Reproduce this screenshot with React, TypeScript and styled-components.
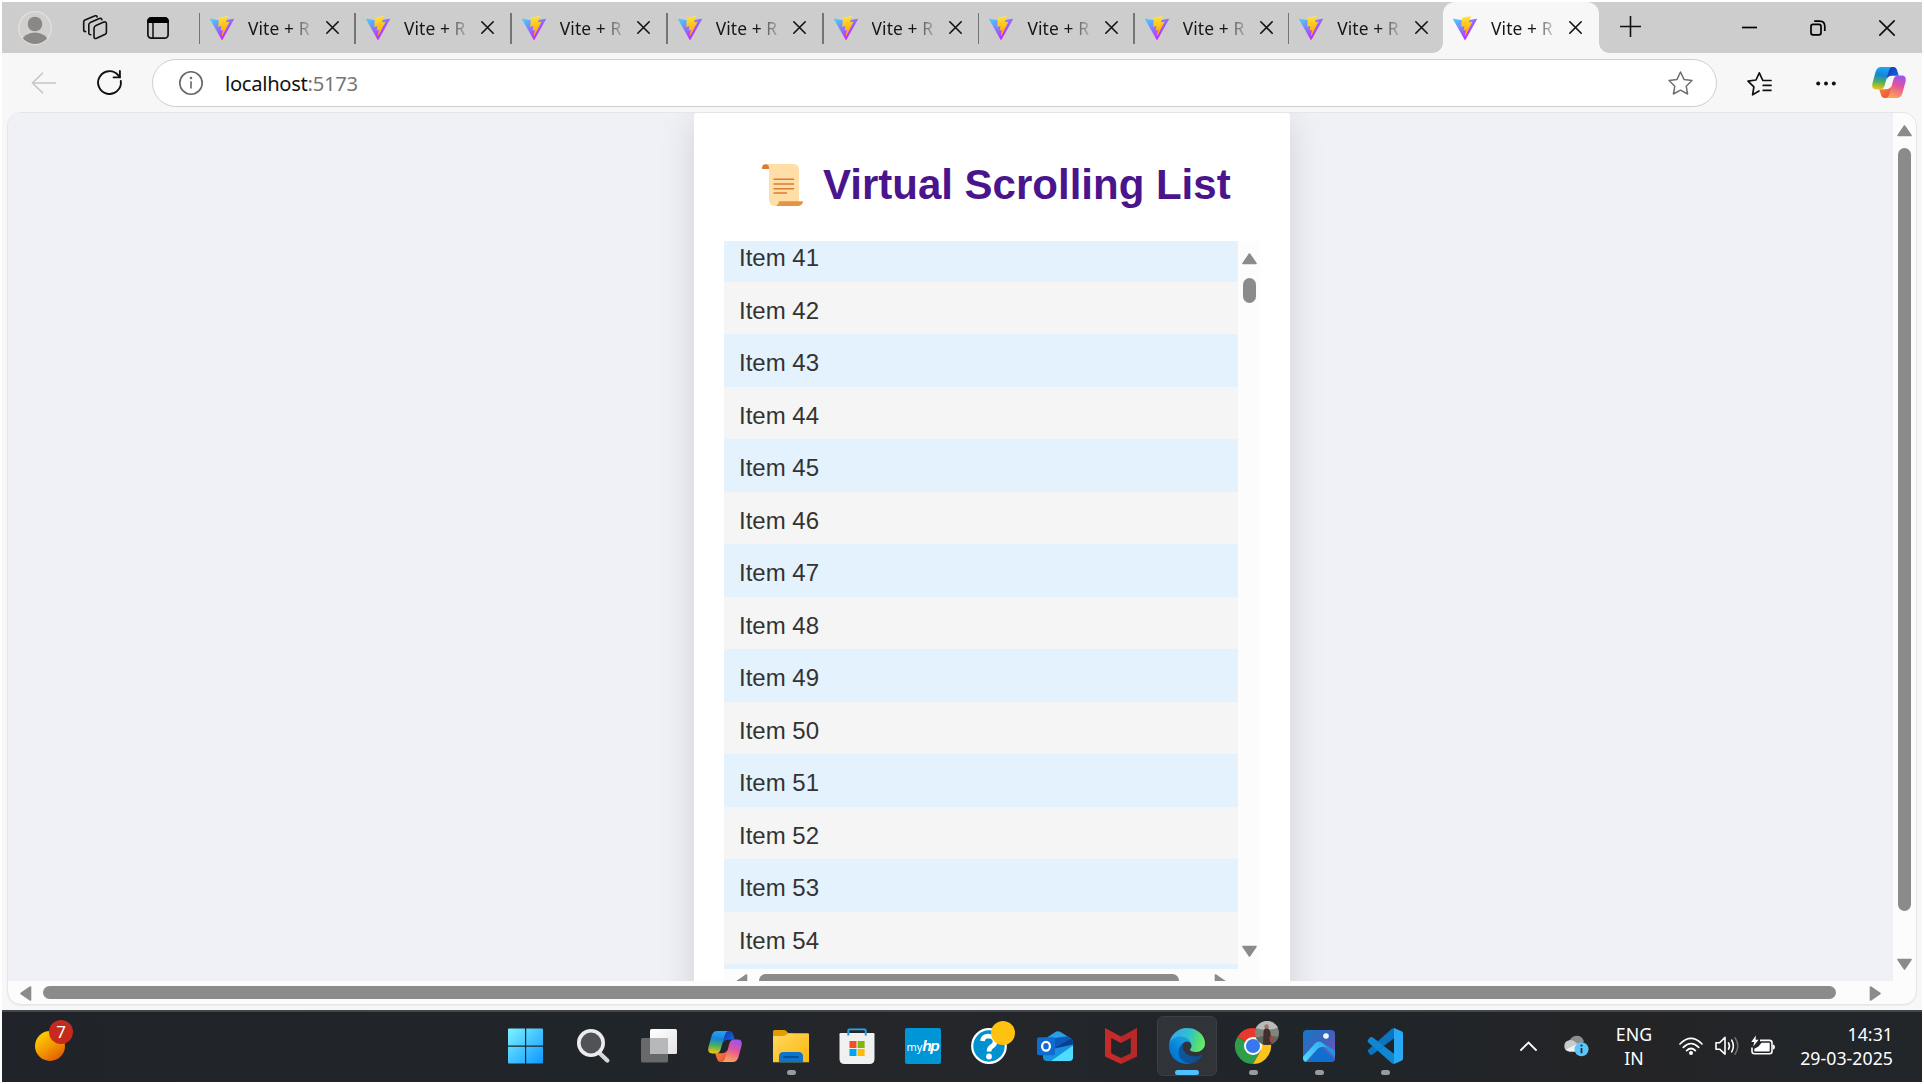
import React from "react";
import styled, { createGlobalStyle } from "styled-components";

const GlobalStyle = createGlobalStyle`
  * { box-sizing: border-box; }
  body { margin: 0; background: #fff; overflow: hidden; }
  svg { display: block; flex: none; overflow: visible; }
`;

const UI = `"Noto Sans", "Open Sans", sans-serif`;
const ARIAL = `"Liberation Sans", Arial, sans-serif`;

const Screen = styled.div`
  width: 1924px;
  height: 1084px;
  padding: 2px;
  display: flex;
  flex-direction: column;
  background: #fff;
  font-family: ${UI};
  overflow: hidden;
`;

/* ---------- tab strip ---------- */

const TabStrip = styled.header`
  height: 51px;
  flex: none;
  display: flex;
  align-items: center;
  background: #cdcdcd;
`;

const StripTools = styled.div`
  width: 197px;
  height: 51px;
  padding-left: 16px;
  display: flex;
  align-items: center;
`;

const StripTool = styled.div<{ $gap: number }>`
  margin-right: ${(p) => p.$gap}px;
`;

const Tab = styled.div<{ $width: number; $active?: boolean }>`
  position: relative;
  width: ${(p) => p.$width}px;
  height: 51px;
  flex: none;
  display: flex;
  align-items: center;
  padding-left: ${(p) => (p.$active ? 10.5 : 11)}px;
  border-radius: ${(p) => (p.$active ? "12px 12px 0 0" : "0")};
  background: ${(p) => (p.$active ? "#f7f7f7" : "transparent")};

  &::before {
    content: "";
    display: ${(p) => (p.$active ? "none" : "block")};
    position: absolute;
    left: -0.5px;
    top: 11px;
    width: 1.5px;
    height: 31px;
    background: #757575;
  }
`;

const Flare = styled.span<{ $side: "left" | "right" }>`
  position: absolute;
  bottom: 0;
  ${(p) => p.$side}: -10px;
  width: 10px;
  height: 10px;
  background: radial-gradient(
    circle at ${(p) => (p.$side === "left" ? "0 0" : "100% 0")},
    transparent 9.5px,
    #f7f7f7 10px
  );
`;

const TabTitle = styled.span`
  width: 66px;
  margin-left: 14px;
  margin-right: 11.5px;
  white-space: nowrap;
  font-size: 17.4px;
  line-height: 26px;
  letter-spacing: 0.1px;
  color: #161616;
  mask-image: linear-gradient(to right, #000 44px, rgba(0, 0, 0, 0.5) 53px, rgba(0, 0, 0, 0.12) 64px);
`;

const NewTab = styled.div`
  margin-left: 21px;
  margin-top: -2px;
`;

const WindowButtons = styled.div`
  margin-left: auto;
  padding-right: 27px;
  display: flex;
  align-items: center;
  gap: 53px;
`;

/* ---------- toolbar ---------- */

const Toolbar = styled.nav`
  height: 59px;
  flex: none;
  display: flex;
  align-items: center;
  padding: 0 16px 0 29px;
  background: #f7f7f7;
`;

const Reload = styled.div`
  margin: 0 30px 0 40px;
`;

const AddressBar = styled.div`
  width: 1565px;
  height: 48px;
  display: flex;
  align-items: center;
  padding: 0 23px 0 26px;
  border: 1.5px solid #cfcfcf;
  border-radius: 24px;
  background: #fff;
`;

const Url = styled.span`
  flex: 1;
  margin-left: 22px;
  font-size: 20.2px;
  line-height: 28px;
  letter-spacing: -0.3px;
  color: #111;
`;

const Port = styled.span`
  color: #767676;
`;

const ToolbarActions = styled.div`
  flex: 1;
  display: flex;
  align-items: center;
  justify-content: space-between;
  padding-left: 30px;
`;

/* ---------- page ---------- */

const BrowserBody = styled.main`
  flex: 1;
  min-height: 0;
  padding: 0 5px 5px 5px;
  background: #f7f7f7;
`;

const PageFrame = styled.div`
  height: 893px;
  display: grid;
  grid-template-columns: 1fr 23px;
  grid-template-rows: 1fr 23px;
  border: 1px solid #e6e6e6;
  border-radius: 14px;
  background: #fcfcfc;
  box-shadow: 0 1px 1px rgba(0, 0, 0, 0.05);
  overflow: hidden;
`;

const Viewport = styled.div`
  background: #f0f1f6;
  overflow: hidden;
  display: flex;
  align-items: flex-start;
  justify-content: flex-start;
`;

const Card = styled.section`
  width: 596px;
  height: 960px;
  flex: none;
  margin-left: 686px;
  padding: 42px 30px 0;
  border-radius: 3px;
  background: #fff;
  box-shadow: 0 6px 36px rgba(0, 0, 0, 0.13);
`;

const Title = styled.h1`
  height: 86px;
  margin: 0;
  padding-left: 38px;
  display: flex;
  align-items: flex-start;
  gap: 20px;
  font-family: ${ARIAL};
  font-size: 42px;
  line-height: 60px;
  font-weight: 700;
  color: #4a148c;
  white-space: nowrap;

  svg { margin-top: 9px; }
`;

const ListBox = styled.div`
  width: 536px;
  height: 751px;
  display: grid;
  grid-template-columns: 1fr 22px;
  grid-template-rows: 728px 23px;
  background: #fcfcfc;
`;

const Items = styled.ul`
  margin: 0;
  padding: 0;
  list-style: none;
  overflow: hidden;
`;

const Item = styled.li<{ $even: boolean }>`
  height: 52.5px;
  padding: 5px 0 0 15px;
  font-family: ${ARIAL};
  font-size: 24px;
  line-height: 48.5px;
  color: #333;
  background: ${(p) => (p.$even ? "#f5f5f5" : "#e3f2fd")};

  &:first-child { margin-top: -11.8px; }
`;

/* ---------- scrollbars ---------- */

const VTrack = styled.div<{ $top: number; $bottom: number }>`
  display: flex;
  flex-direction: column;
  align-items: center;
  padding: ${(p) => p.$top}px 0 ${(p) => p.$bottom}px;
`;

const HTrack = styled.div<{ $left: number; $right: number; $top: number }>`
  display: flex;
  align-items: flex-start;
  padding: ${(p) => p.$top}px ${(p) => p.$right}px 0 ${(p) => p.$left}px;
`;

const Thumb = styled.div<{ $w: number; $h: number; $lead: number }>`
  width: ${(p) => p.$w}px;
  height: ${(p) => p.$h}px;
  margin: ${(p) => (p.$h > p.$w ? `${p.$lead}px 0 auto` : `0 auto 0 ${p.$lead}px`)};
  flex: none;
  border-radius: 7px;
  background: #8b8b8b;
`;

/* ---------- taskbar ---------- */

const Taskbar = styled.footer`
  height: 72px;
  flex: none;
  display: flex;
  align-items: center;
  padding-bottom: 2px;
  border-top: 2px solid #43474a;
  background: linear-gradient(90deg, #20242a 0%, #202529 30%, #24262a 48%, #202529 70%, #242426 86%, #21262a 100%);
`;

const Widgets = styled.div`
  position: relative;
  width: 492px;
  height: 70px;
  padding: 20px 0 0 33px;
`;

const Sun = styled.div`
  width: 30px;
  height: 30px;
  border-radius: 50%;
  background: linear-gradient(145deg, #ffd500 8%, #f39a00 50%, #e15100 95%);
`;

const Count = styled.span`
  position: absolute;
  left: 47px;
  top: 9px;
  width: 24px;
  height: 24px;
  border-radius: 50%;
  background: #c42b1c;
  color: #fff;
  font-size: 17px;
  line-height: 24px;
  text-align: center;
`;

const Apps = styled.div`
  display: flex;
`;

const AppCell = styled.div<{ $active?: boolean }>`
  position: relative;
  width: 60px;
  height: 60px;
  margin: 0 3px;
  display: flex;
  align-items: center;
  justify-content: center;
  border-radius: 6px;
  border: 1.5px solid ${(p) => (p.$active ? "#3c3f44" : "transparent")};
  background: ${(p) => (p.$active ? "#303338" : "transparent")};
`;

const Running = styled.span<{ $active?: boolean }>`
  position: absolute;
  bottom: 0;
  left: 50%;
  width: ${(p) => (p.$active ? 24 : 9)}px;
  height: 5px;
  margin-left: ${(p) => (p.$active ? -12 : -4.5)}px;
  border-radius: 3px;
  background: ${(p) => (p.$active ? "#4cc2ff" : "#9a9b9d")};
`;

const HpTile = styled.div`
  width: 36px;
  height: 36px;
  border-radius: 2px;
  display: flex;
  align-items: baseline;
  justify-content: center;
  background: #0096d6;
  color: #fff;
  font-size: 11px;
  line-height: 35px;
`;

const HpBold = styled.b`
  font-family: ${ARIAL};
  font-style: italic;
  font-size: 15.5px;
  letter-spacing: -1.6px;
  margin-right: 1.5px;
`;

const Tray = styled.div`
  margin-left: auto;
  padding-right: 29px;
  display: flex;
  align-items: center;
  color: #fff;
`;

const TrayItem = styled.div<{ $gap: number }>`
  margin-right: ${(p) => p.$gap}px;
`;

const TrayText = styled.div<{ $align: "center" | "right" }>`
  font-size: 17.7px;
  line-height: 24px;
  letter-spacing: 0.05px;
  text-align: ${(p) => p.$align};
  white-space: nowrap;
`;

/* ---------- drawings ---------- */

const Vite = ({ id }: { id: string }) => (
  <svg width="24" height="24" viewBox="0 0 256 257">
    <defs>
      <linearGradient id={`${id}a`} x1="-.8%" x2="57.6%" y1="7.7%" y2="78.4%">
        <stop offset="0" stopColor="#41D1FF" />
        <stop offset="1" stopColor="#BD34FE" />
      </linearGradient>
      <linearGradient id={`${id}b`} x1="43.4%" x2="50.3%" y1="2.2%" y2="89%">
        <stop offset="0" stopColor="#FFEA83" />
        <stop offset=".083" stopColor="#FFDD35" />
        <stop offset="1" stopColor="#FFA800" />
      </linearGradient>
    </defs>
    <path fill={`url(#${id}a)`} d="M255.153 37.938L134.897 252.976c-2.483 4.44-8.862 4.466-11.382.048L.875 37.958c-2.746-4.814 1.371-10.646 6.827-9.67l120.385 21.517a6.537 6.537 0 0 0 2.322-.004l117.867-21.483c5.438-.991 9.574 4.796 6.877 9.62Z" />
    <path fill={`url(#${id}b)`} d="M185.432.063L96.44 17.501a3.268 3.268 0 0 0-2.634 3.014l-5.474 92.456a3.268 3.268 0 0 0 3.997 3.378l24.777-5.718c2.318-.535 4.413 1.507 3.936 3.838l-7.361 36.047c-.495 2.426 1.782 4.5 4.151 3.78l15.304-4.649c2.372-.72 4.652 1.36 4.15 3.788l-11.698 56.621c-.732 3.542 3.979 5.473 5.943 2.437l1.313-2.028l72.516-144.72c1.215-2.423-.88-5.186-3.54-4.672l-25.505 4.922c-2.396.462-4.435-1.77-3.759-4.114l16.646-57.705c.677-2.35-1.37-4.583-3.769-4.113Z" />
  </svg>
);

const Cross = ({ size, w }: { size: number; w: number }) => (
  <svg width={size} height={size} viewBox={`0 0 ${size} ${size}`} stroke="#111" strokeWidth={w} strokeLinecap="round">
    <path d={`M.8 .8L${size - 0.8} ${size - 0.8}M${size - 0.8} .8L.8 ${size - 0.8}`} />
  </svg>
);

const Avatar = () => (
  <svg width="34" height="34" viewBox="0 0 34 34">
    <defs>
      <clipPath id="avatarClip"><circle cx="17" cy="17" r="16" /></clipPath>
    </defs>
    <circle cx="17" cy="17" r="16.3" fill="#d2d0ce" stroke="#e3e1df" strokeWidth="1.2" />
    <g fill="#8a8785" clipPath="url(#avatarClip)">
      <circle cx="17" cy="13" r="7.3" />
      <ellipse cx="17" cy="31" rx="13" ry="9.6" />
    </g>
  </svg>
);

const Workspaces = () => (
  <svg width="25" height="25" viewBox="0 0 25 25" fill="none" stroke="#111" strokeWidth="1.6" strokeLinecap="round" strokeLinejoin="round">
    <path d="M13 10.4L20.8 7.1Q23.4 6.3 23.4 8.8V17.3Q23.4 18.7 22.2 19.3L13.6 23.3Q11 24.2 11 21.8V13.4Q11 11.2 13 10.4Z" />
    <path d="M7.8 19.7Q5.8 19.8 5.8 17.8V9.9Q5.8 8.3 7.2 7.6L16.4 3.6Q18.6 2.8 18.9 4.8" />
    <path d="M2.6 16.6Q.7 16.6 .7 14.7V7Q.7 5.5 2 4.9L11.5 .9Q13.6 .2 14.1 1.9" />
  </svg>
);

const TabActions = () => (
  <svg width="22" height="22" viewBox="0 0 22 22">
    <rect x=".9" y=".9" width="20.2" height="20.2" rx="3.4" fill="none" stroke="#111" strokeWidth="1.7" />
    <path d="M.4 6V4A3.6 3.6 0 0 1 4 .2H18A3.6 3.6 0 0 1 21.6 4V6Z" fill="#000" />
    <path d="M6 6V21" stroke="#111" strokeWidth="1.5" />
  </svg>
);

const Copilot = ({ id, size }: { id: string; size: number }) => (
  <svg width={size} height={(size * 31) / 34} viewBox="0 0 34 31">
    <defs>
      <linearGradient id={`${id}a`} x1=".4" y1="0" x2=".3" y2="1">
        <stop offset="0" stopColor="#1fa5f5" />
        <stop offset=".35" stopColor="#1684d8" />
        <stop offset=".65" stopColor="#4cae61" />
        <stop offset="1" stopColor="#f5c70a" />
      </linearGradient>
      <linearGradient id={`${id}b`} x1=".7" y1="0" x2=".4" y2="1">
        <stop offset="0" stopColor="#9a55f0" />
        <stop offset=".45" stopColor="#e2559b" />
        <stop offset="1" stopColor="#ffa455" />
      </linearGradient>
      <linearGradient id={`${id}c`} x1="0" y1="0" x2="1" y2="1">
        <stop offset="0" stopColor="#1a2fb4" />
        <stop offset="1" stopColor="#0c74e0" />
      </linearGradient>
      <linearGradient id={`${id}d`} x1="0" y1="0" x2="1" y2="1">
        <stop offset="0" stopColor="#f98a3c" />
        <stop offset="1" stopColor="#ec4a3e" />
      </linearGradient>
    </defs>
    <path fill={`url(#${id}c)`} d="M17 0H21.5Q24 0 25 3L26.8 8.7H20Q16.5 8.8 14.5 12L15 4Z" />
    <path fill={`url(#${id}d)`} d="M17 31H12.5Q10 31 9 28L7.2 22.3H14Q17.5 22.2 19.5 19L19 27Z" />
    <path fill={`url(#${id}a)`} d="M9 0H20Q17.8 .5 16.8 4L12.6 18.5Q11.4 22.4 8 22.4H4.5Q-.8 22.4 .4 16.5L3.6 4.8Q5 0 9 0Z" />
    <path fill={`url(#${id}b)`} d="M25 31H13.8Q16.3 30.5 17.3 27L21.4 12.5Q22.6 8.6 26 8.6H29.5Q34.8 8.6 33.6 14.5L30.4 26.2Q29 31 25 31Z" />
  </svg>
);

const Arrow = ({ dir }: { dir: "up" | "down" | "left" | "right" }) => {
  const paths = {
    up: "M7.5 1L14 10.5H1Z",
    down: "M1 .5H14L7.5 10Z",
    left: "M10.5 1V14L1 7.5Z",
    right: "M.5 1V14L10 7.5Z",
  };
  const vertical = dir === "up" || dir === "down";
  const w = vertical ? 15 : 11;
  const h = vertical ? 11 : 15;
  return (
    <svg width={w} height={h} viewBox={`0 0 ${w} ${h}`} fill="#8b8b8b" stroke="#8b8b8b" strokeWidth="1.6" strokeLinejoin="round">
      <path d={paths[dir]} />
    </svg>
  );
};

const Scroll = () => (
  <svg width="41" height="42" viewBox="0 0 41 42">
    <path d="M3 0H32Q37 .5 37 6V42H13Q7 42 7 35V4.8H3Z" fill="#ffdea7" />
    <path d="M0 5V3.5Q.5 .3 3.7 .3 7 .5 7 4V5Z" fill="#d67d36" />
    <path d="M17 37.2H41Q41 42 35 42H13.5Q16.5 41 17 37.2Z" fill="#e59445" />
    <g stroke="#d67d36" strokeWidth="1.5">
      <path d="M11.5 15.3H32M11.5 20H32M11.5 24.7H32M11.5 29H25" />
    </g>
  </svg>
);

const StartIcon = () => (
  <svg width="36" height="36" viewBox="0 0 36 36">
    <defs>
      <linearGradient id="win" x1="0" y1="0" x2="36" y2="36" gradientUnits="userSpaceOnUse">
        <stop offset="0" stopColor="#7bf3ff" />
        <stop offset="1" stopColor="#0a93ff" />
      </linearGradient>
    </defs>
    <path fill="url(#win)" d="M0 .5H16V17.5H-1V1.5Q-1 .5 0 .5ZM17.2 .5H33Q34 .5 34 1.5V17.5H17.2ZM-1 18.7H16V35.5H0Q-1 35.5 -1 34.5ZM17.2 18.7H34V34.5Q34 35.5 33 35.5H17.2Z" />
  </svg>
);

const SearchIcon = () => (
  <svg width="36" height="36" viewBox="0 0 36 36">
    <path d="M24.5 25L32.3 32.5" stroke="#d5d7d9" strokeWidth="4.4" strokeLinecap="round" />
    <circle cx="16" cy="15" r="12.2" fill="#505255" stroke="#ececee" strokeWidth="3.6" />
  </svg>
);

const TaskViewIcon = () => (
  <svg width="36" height="36" viewBox="0 0 36 36">
    <defs>
      <linearGradient id="tv" x1="0" y1="0" x2="1" y2="1">
        <stop offset="0" stopColor="#fff" />
        <stop offset="1" stopColor="#e4e4e4" />
      </linearGradient>
    </defs>
    <rect x="0" y="10" width="27" height="24.5" rx="1.5" fill="#68696b" />
    <rect x="9" y="1" width="27" height="25" rx="1.5" fill="url(#tv)" />
    <rect x="9" y="10" width="18" height="16" fill="#b7b8b9" />
  </svg>
);

const FolderIcon = () => (
  <svg width="36" height="36" viewBox="0 0 36 36">
    <defs>
      <linearGradient id="fold" x1="0" y1="0" x2="1" y2="1">
        <stop offset="0" stopColor="#ffd862" />
        <stop offset="1" stopColor="#fbb70b" />
      </linearGradient>
    </defs>
    <path d="M0 3.5Q0 2 1.5 2H11Q12.5 2 13.5 3.2L15.5 5.5H20V12H0Z" fill="#e09c00" />
    <path d="M0 8H10.5Q12.3 8 13.5 6.6L15 5.2H34.8Q36 5.2 36 6.4V34.3H0Z" fill="url(#fold)" />
    <path d="M6 34.3V28.5Q6 24 10.5 24H25.5Q30 24 30 28.5V34.3Z" fill="#0b74cc" />
    <path d="M11 29H25" stroke="#084f93" strokeWidth="2" strokeLinecap="round" />
  </svg>
);

const StoreIcon = () => (
  <svg width="36" height="36" viewBox="0 0 36 36">
    <path d="M9.3 6V2.4Q9.3 1.4 10.4 1.4H25.6Q26.7 1.4 26.7 2.4V6" fill="none" stroke="#1fa9ec" strokeWidth="1.9" />
    <path d="M.5 6.2Q.5 5 1.7 5H34.3Q35.5 5 35.5 6.2V31Q35.5 36 30.5 36H5.5Q.5 36 .5 31Z" fill="#f0f0f0" />
    <path d="M9.3 5V7.4M26.7 5V7.4" stroke="#1b8fd0" strokeWidth="1.9" />
    <rect x="10.5" y="13" width="7" height="7" fill="#f25022" />
    <rect x="18.6" y="13" width="7" height="7" fill="#7fba00" />
    <rect x="10.5" y="21" width="7" height="7" fill="#00a4ef" />
    <rect x="18.6" y="21" width="7" height="7" fill="#ffb900" />
  </svg>
);

const HelpIcon = () => (
  <svg width="36" height="36" viewBox="0 0 36 36">
    <circle cx="18" cy="18" r="16.8" fill="#0092d0" stroke="#fff" strokeWidth="2.2" />
    <path d="M11.5 13Q12 8 17.5 8 24 8.5 24 13.5 24 16.5 21 18.3 18 20.2 18 23.5" fill="none" stroke="#fff" strokeWidth="4.6" />
    <circle cx="18" cy="28.5" r="2.9" fill="#fff" />
    <circle cx="32" cy="5" r="12" fill="#ffc20e" />
  </svg>
);

const OutlookIcon = () => (
  <svg width="36" height="36" viewBox="0 0 36 36">
    <path d="M6 12L18 4.2Q21 2.3 24 4.2L34 10.5Q36 12 36 14V20L20 30 6 25Z" fill="#28a0e8" />
    <path d="M14 10.5L30.5 8.3 36 12.5V15.5L17.5 27.5 12 22Z" fill="#0c59b8" />
    <path d="M18 20L34 10.4 36 13.5V17L20 27Z" fill="#0a3f8f" />
    <path d="M6 23L36 16.5V29Q36 33 32 33H10Q6 33 6 29Z" fill="#1591e0" />
    <path d="M14 33L36 17.5V29Q36 33 32 33Z" fill="#4fdcff" />
    <rect x="0" y="9.3" width="18" height="18" rx="2" fill="#0f6cd0" />
    <ellipse cx="9" cy="18.3" rx="3.9" ry="4.4" fill="none" stroke="#fff" strokeWidth="2.3" />
  </svg>
);

const McAfeeIcon = () => (
  <svg width="36" height="36" viewBox="0 0 36 36">
    <path d="M2 0L18 8.4V15L8.2 10V25.2L18 30V36L2 28.4Z" fill="#c62b2a" />
    <path d="M34 0L18 8.4V15L27.8 10V25.2L18 30V36L34 28.4Z" fill="#b72827" />
  </svg>
);

const EdgeIcon = () => (
  <svg width="36" height="36" viewBox="0 0 256 256">
    <defs>
      <linearGradient id="e1" x1="63" y1="177" x2="241" y2="177" gradientUnits="userSpaceOnUse">
        <stop offset="0" stopColor="#0c59a4" />
        <stop offset="1" stopColor="#114a8b" />
      </linearGradient>
      <linearGradient id="e2" x1="157" y1="100" x2="46" y2="222" gradientUnits="userSpaceOnUse">
        <stop offset="0" stopColor="#1b9de2" />
        <stop offset=".3" stopColor="#1595df" />
        <stop offset=".7" stopColor="#0680d7" />
        <stop offset="1" stopColor="#0078d4" />
      </linearGradient>
      <linearGradient id="e3" x1="20" y1="60" x2="250" y2="130" gradientUnits="userSpaceOnUse">
        <stop offset="0" stopColor="#35a9e8" />
        <stop offset=".5" stopColor="#2fc2cf" />
        <stop offset=".85" stopColor="#5be06a" />
        <stop offset="1" stopColor="#66eb6e" />
      </linearGradient>
    </defs>
    <g transform="translate(-4.6 -5)">
      <path fill="url(#e1)" d="M235.7 195.5a93.7 93.7 0 0 1-10.6 4.7 101.9 101.9 0 0 1-35.9 6.4c-47.3 0-88.5-32.5-88.5-74.3a31.5 31.5 0 0 1 16.4-27.3c-42.8 1.8-53.8 46.4-53.8 72.5 0 73.9 68.1 81.4 82.8 81.4 7.9 0 19.8-2.3 27-4.6l1.3-.4a128.3 128.3 0 0 0 66.6-52.8 4 4 0 0 0-5.3-5.6z" />
      <path fill="url(#e2)" d="M110.3 246.3A79.2 79.2 0 0 1 87.6 225a80.7 80.7 0 0 1 29.5-120c3.2-1.5 8.5-4.1 15.6-4a32.4 32.4 0 0 1 25.7 13 31.9 31.9 0 0 1 6.3 18.7c0-.2 24.5-79.6-80-79.6-43.9 0-80 41.6-80 78.2a130.2 130.2 0 0 0 12.1 56 128 128 0 0 0 156.4 67 75.5 75.5 0 0 1-62.8-8z" />
      <path fill="url(#e3)" d="M156.9 153.8c-.8 1-3.3 2.5-3.3 5.6 0 2.6 1.7 5.1 4.7 7.3 14.4 10 41.5 8.7 41.6 8.7a59.6 59.6 0 0 0 30.3-8.3 61.4 61.4 0 0 0 30.4-52.9c.3-22.4-8-37.3-11.3-43.9C228 28.8 182.3 5 132.6 5a128 128 0 0 0-128 126.2c.5-36.5 36.8-66 80-66 3.5 0 23.5.3 42 10a72.6 72.6 0 0 1 30.9 29.3c6.1 10.6 7.2 24.1 7.2 29.5 0 5.3-2.7 13.3-7.8 19.8z" />
    </g>
  </svg>
);

const ChromeIcon = () => (
  <svg width="36" height="36" viewBox="0 0 36 36">
    <defs>
      <clipPath id="photoClip"><circle cx="32" cy="5" r="12" /></clipPath>
    </defs>
    <path d="M18 18L2.4 9A18 18 0 0 1 33.6 9Z" fill="#e8392d" />
    <path d="M18 18L2.4 9A18 18 0 0 0 18 36L25.8 22.5Z" fill="#2f9e4a" />
    <path d="M18 9H33.6A18 18 0 0 1 18 36L25.8 22.5Z" fill="#fcc31c" />
    <circle cx="18" cy="18" r="9" fill="#fff" />
    <circle cx="18" cy="18" r="7.1" fill="#3878ee" />
    <g clipPath="url(#photoClip)">
      <rect x="20" y="-7" width="24" height="24" fill="#7f857b" />
      <path d="M20 -7H44V-1Q34 4 20 0Z" fill="#b9bbb9" />
      <path d="M20 10Q30 6 44 9V17H20Z" fill="#5f665c" />
      <path d="M28.5 4Q29 0 31.5 0 34.5 0 35.5 5L36.5 17H28Z" fill="#3f302e" />
      <circle cx="31.5" cy="-1.5" r="2.2" fill="#9b7668" />
      <path d="M34.5 9L37.5 8V14H35Z" fill="#b63c38" />
    </g>
  </svg>
);

const PhotosIcon = () => (
  <svg width="36" height="36" viewBox="0 0 36 36">
    <defs>
      <linearGradient id="ph" x1="0" y1="0" x2="1" y2="1">
        <stop offset="0" stopColor="#1579c8" />
        <stop offset=".5" stopColor="#3c62bb" />
        <stop offset="1" stopColor="#8b50b8" />
      </linearGradient>
      <linearGradient id="ph2" x1="1" y1="0" x2="0" y2="1">
        <stop offset="0" stopColor="#2fa9ee" />
        <stop offset="1" stopColor="#4fe0ff" />
      </linearGradient>
      <clipPath id="phc"><rect x="2" y="2" width="32" height="32" rx="4" /></clipPath>
    </defs>
    <g clipPath="url(#phc)">
      <rect x="2" y="2" width="32" height="32" fill="url(#ph)" />
      <path d="M8 34L18 18 34 31V34Z" fill="#0e6fd0" />
      <path d="M18 14L36 31V24L20.5 14.5Z" fill="#1d95e6" />
      <path d="M0 31L14.5 15Q18 11.8 21.5 15L26 19.5Q20 17.5 16.5 21L4.5 34H0Z" fill="url(#ph2)" />
    </g>
    <circle cx="25" cy="8" r="2.8" fill="#f4f6ff" />
  </svg>
);

const CodeIcon = () => (
  <svg width="36" height="36" viewBox="0 0 36 36">
    <path d="M1.2 12L3 9.6Q4.2 8.6 5.6 9.5L27 25.7V36L24.8 35.2 1 14Q.2 13 1.2 12Z" fill="#0f87d2" />
    <path d="M1.2 24L3 26.4Q4.2 27.4 5.6 26.5L27 10.3V0L24.8 .8 1 22Q.2 23 1.2 24Z" fill="#0a74c0" />
    <path d="M1.2 12L3 9.6Q4.2 8.6 5.6 9.5L16 17.4 10.5 22.4 1 14Q.2 13 1.2 12Z" fill="#0f87d2" />
    <path d="M27 0L35 3.6Q36 4.2 36 5.4V30.6Q36 31.8 35 32.4L27 36Z" fill="#29a9f3" />
  </svg>
);

const Cloud = () => (
  <svg width="25" height="22" viewBox="0 0 25 22">
    <path d="M5 6Q8 .8 13 .8 18 .8 20 6.5L12 12Z" fill="#8d8e90" />
    <path d="M5.3 5.2Q9.5 4.6 12.5 8L19 12 14 16.5H5.5Q.3 16 .3 11 .5 6 5.3 5.2Z" fill="#c9cacc" />
    <path d="M2 14.5L13 9 12 16.5H5.5Q3 16 2 14.5Z" fill="#f1f1f1" />
    <circle cx="17.5" cy="14.3" r="7" fill="#5bc6fb" />
    <path d="M17.5 13V18.2" stroke="#15303f" strokeWidth="1.8" />
    <circle cx="17.5" cy="10.6" r="1.1" fill="#15303f" />
  </svg>
);

const Wifi = () => (
  <svg width="24" height="19" viewBox="0 0 24 19" fill="none" stroke="#fff" strokeWidth="1.7" strokeLinecap="round">
    <path d="M1 7Q12 -4.3 23 7M4.3 10.4Q12 2.6 19.7 10.4M7.6 13.6Q12 9.4 16.4 13.6" />
    <circle cx="12" cy="16" r="2" fill="#fff" stroke="none" />
  </svg>
);

const Speaker = () => (
  <svg width="24" height="20" viewBox="0 0 24 20" fill="none" stroke="#fff" strokeWidth="1.6" strokeLinecap="round" strokeLinejoin="round">
    <path d="M1 6.8H4.6L10 1.4V18.2L4.6 13.2H1Z" />
    <path d="M13.5 6.8Q15.4 10 13.5 13.2" />
    <path d="M16.7 4.2Q20 10 16.7 15.8" />
    <path d="M20 1.8Q25.6 10 20 18.2" stroke="#6b6d70" />
  </svg>
);

const Battery = () => (
  <svg width="24" height="20" viewBox="0 0 24 20">
    <path d="M9 4.4H18.5Q21 4.4 21 6.9V15.3Q21 17.8 18.5 17.8H3.5Q1 17.8 1 15.3V11.5" fill="none" stroke="#fff" strokeWidth="1.6" />
    <path d="M10.5 6.7H18.7V15.5H3.3V12.7L7.5 10.5Z" fill="#fff" />
    <path d="M22 8.5V13.7Q24 13.5 24 11.1 24 8.8 22 8.5Z" fill="#fff" />
    <path d="M4.8 -.5L.3 6H3.2L2.2 10.5 7.6 3.8H4.6Z" fill="#fff" />
  </svg>
);

/* ---------- composition ---------- */

const TAB_WIDTHS = [155.9, 155.9, 155.9, 155.9, 155.9, 155.3, 154.4, 154.4, 156];

const APPS = [
  { icon: <StartIcon /> },
  { icon: <SearchIcon /> },
  { icon: <TaskViewIcon /> },
  { icon: <Copilot id="ct" size={34} /> },
  { icon: <FolderIcon />, running: true },
  { icon: <StoreIcon /> },
  { icon: <HpTile>my<HpBold>hp</HpBold></HpTile> },
  { icon: <HelpIcon /> },
  { icon: <OutlookIcon /> },
  { icon: <McAfeeIcon /> },
  { icon: <EdgeIcon />, running: true, active: true },
  { icon: <ChromeIcon />, running: true },
  { icon: <PhotosIcon />, running: true },
  { icon: <CodeIcon />, running: true },
];

const ROWS = Array.from({ length: 14 }, (_, i) => 41 + i);

export default function App() {
  return (
    <Screen>
      <GlobalStyle />
      <TabStrip>
        <StripTools>
          <StripTool $gap={31}><Avatar /></StripTool>
          <StripTool $gap={39}><Workspaces /></StripTool>
          <StripTool $gap={0}><TabActions /></StripTool>
        </StripTools>
        {TAB_WIDTHS.map((width, i) => (
          <Tab key={i} $width={width} $active={i === 8}>
            {i === 8 && <Flare $side="left" />}
            {i === 8 && <Flare $side="right" />}
            <Vite id={`v${i}`} />
            <TabTitle>Vite + R</TabTitle>
            <Cross size={13} w={1.6} />
          </Tab>
        ))}
        <NewTab>
          <svg width="21" height="21" viewBox="0 0 21 21" stroke="#111" strokeWidth="1.6">
            <path d="M10.5 0V21M0 10.5H21" />
          </svg>
        </NewTab>
        <WindowButtons>
          <svg width="15" height="16" viewBox="0 0 15 16"><path d="M0 7.5H15" stroke="#000" strokeWidth="1.7" /></svg>
          <svg width="16" height="16" viewBox="0 0 16 16" fill="none" stroke="#000" strokeWidth="1.7">
            <rect x="1" y="4.4" width="10" height="10.4" rx="2" />
            <path d="M4.2 1.2H9.5Q14.8 1.2 14.8 6.4V11" />
          </svg>
          <Cross size={16} w={1.7} />
        </WindowButtons>
      </TabStrip>

      <Toolbar>
        <svg width="26" height="22" viewBox="0 0 26 22" fill="none" stroke="#c6c6c6" strokeWidth="1.6">
          <path d="M25 11H1.5M12 .8L1.5 11L12 21.2" />
        </svg>
        <Reload>
          <svg width="25" height="25" viewBox="0 0 25 25" fill="none" stroke="#111" strokeWidth="1.9" strokeLinecap="round">
            <path d="M23.8 11A11.4 11.4 0 1 1 21.3 5.3L22.6 7" />
            <path d="M22.9 1V7.4H16.6" />
          </svg>
        </Reload>
        <AddressBar>
          <svg width="24" height="24" viewBox="0 0 24 24" fill="none" stroke="#666" strokeWidth="1.6">
            <circle cx="12" cy="12" r="11.2" />
            <path d="M12 10.2V17.5" />
            <circle cx="12" cy="7" r=".5" />
          </svg>
          <Url>localhost<Port>:5173</Port></Url>
          <svg width="25" height="24" viewBox="0 0 25 24" fill="none" stroke="#707070" strokeWidth="1.5" strokeLinejoin="round">
            <path d="M12.5 1L16 8.4L24 9.5L18.2 15.2L19.6 23L12.5 19.2L5.4 23L6.8 15.2L1 9.5L9 8.4Z" />
          </svg>
        </AddressBar>
        <ToolbarActions>
          <svg width="25" height="24" viewBox="0 0 25 24" fill="none" stroke="#111" strokeWidth="1.7" strokeLinejoin="round" strokeLinecap="round">
            <path d="M12 20L5.6 23.8L6.9 15.8L1 10.1L9 9L12.3 1.8L15.6 9" />
            <path d="M16.2 9.5H24M16.2 14.4H24M16.2 19.3H24" />
          </svg>
          <svg width="28" height="7" viewBox="-8 0 28 7" fill="#111">
            <circle cx="2.2" cy="4.6" r="2" /><circle cx="10" cy="4.6" r="2" /><circle cx="17.8" cy="4.6" r="2" />
          </svg>
          <Copilot id="cb" size={34} />
        </ToolbarActions>
      </Toolbar>

      <BrowserBody>
        <PageFrame>
          <Viewport>
            <Card>
              <Title><Scroll />Virtual Scrolling List</Title>
              <ListBox>
                <Items>
                  {ROWS.map((n) => (
                    <Item key={n} $even={n % 2 === 0}>Item {n}</Item>
                  ))}
                  <Item $even={false} />
                </Items>
                <VTrack $top={12} $bottom={12}>
                  <Arrow dir="up" />
                  <Thumb $w={13} $h={25} $lead={14} />
                  <Arrow dir="down" />
                </VTrack>
                <HTrack $left={12} $right={12} $top={5}>
                  <Arrow dir="left" />
                  <Thumb $w={420} $h={13} $lead={12} />
                  <Arrow dir="right" />
                </HTrack>
              </ListBox>
            </Card>
          </Viewport>
          <VTrack $top={12} $bottom={11}>
            <Arrow dir="up" />
            <Thumb $w={13} $h={763} $lead={12} />
            <Arrow dir="down" />
          </VTrack>
          <HTrack $left={12} $right={12} $top={5}>
            <Arrow dir="left" />
            <Thumb $w={1793} $h={13} $lead={12} />
            <Arrow dir="right" />
          </HTrack>
        </PageFrame>
      </BrowserBody>

      <Taskbar>
        <Widgets>
          <Sun />
          <Count>7</Count>
        </Widgets>
        <Apps>
          {APPS.map((app, i) => (
            <AppCell key={i} $active={app.active}>
              {app.icon}
              {app.running && <Running $active={app.active} />}
            </AppCell>
          ))}
        </Apps>
        <Tray>
          <TrayItem $gap={27}>
            <svg width="17" height="10" viewBox="0 0 17 10" fill="none" stroke="#fff" strokeWidth="1.8" strokeLinecap="round">
              <path d="M1 9L8.5 1.5L16 9" />
            </svg>
          </TrayItem>
          <TrayItem $gap={27}><Cloud /></TrayItem>
          <TrayItem $gap={27}><TrayText $align="center">ENG<br />IN</TrayText></TrayItem>
          <TrayItem $gap={12}><Wifi /></TrayItem>
          <TrayItem $gap={12}><Speaker /></TrayItem>
          <TrayItem $gap={25}><Battery /></TrayItem>
          <TrayText $align="right">14:31<br />29-03-2025</TrayText>
        </Tray>
      </Taskbar>
    </Screen>
  );
}
